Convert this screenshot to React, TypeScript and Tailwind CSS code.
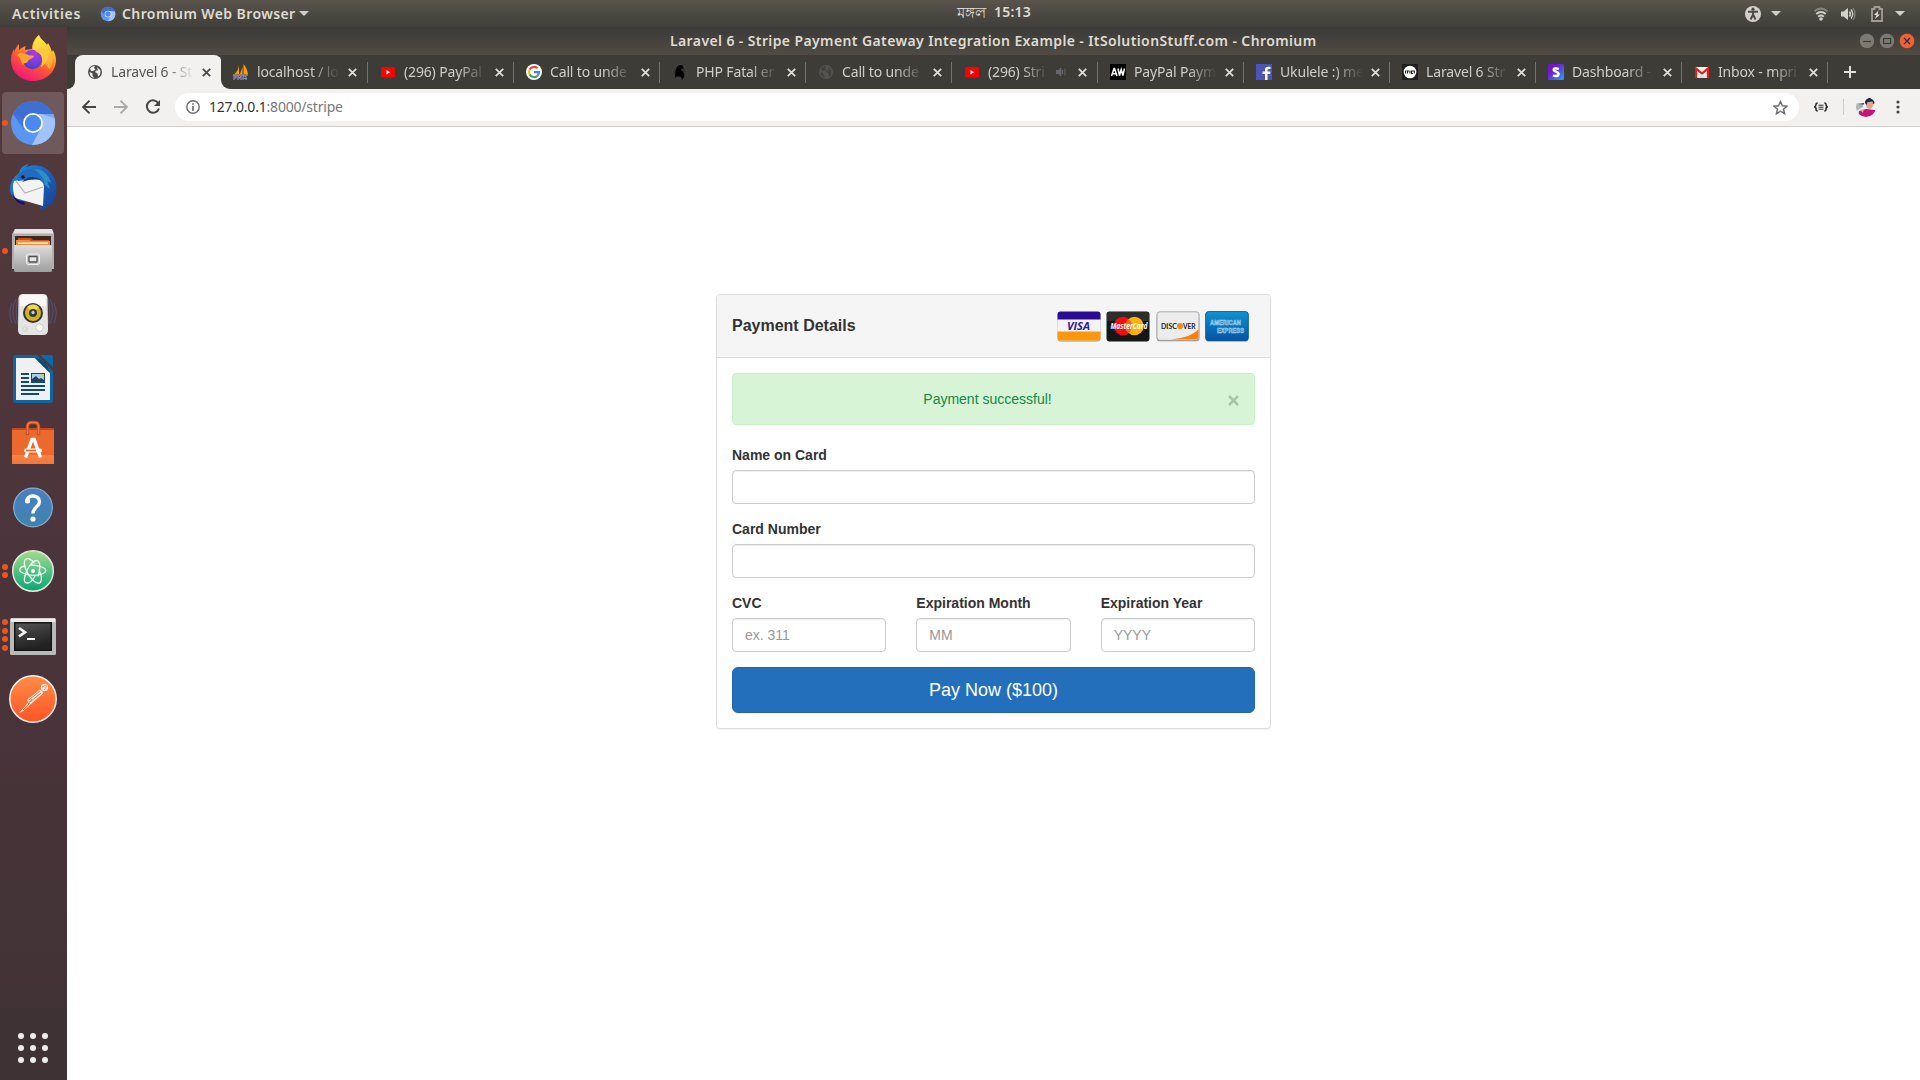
import type { ReactNode } from "react";

/* ---------- dock icons ---------- */

function Firefox() {
  return (
    <svg viewBox="0 0 48 48" className="size-12">
      <defs>
        <linearGradient id="ffBody" x1="0.8" y1="0" x2="0.3" y2="1">
          <stop offset="0" stopColor="#fff44f" />
          <stop offset="0.3" stopColor="#ffb52e" />
          <stop offset="0.6" stopColor="#ff5a35" />
          <stop offset="1" stopColor="#f0127c" />
        </linearGradient>
        <radialGradient id="ffGlobe" cx="0.6" cy="0.2" r="0.9">
          <stop offset="0" stopColor="#b833e1" />
          <stop offset="0.5" stopColor="#7a3fe0" />
          <stop offset="1" stopColor="#3b3fb0" />
        </radialGradient>
        <linearGradient id="ffTail" x1="0" y1="0" x2="0.3" y2="1">
          <stop offset="0" stopColor="#fff44f" />
          <stop offset="1" stopColor="#ffb02e" />
        </linearGradient>
      </defs>
      <path d="M30 0c1 4 5 6 8 10l1-2c2 3 3 6 4 9l1-2c2 3 3 7 3 10 0 12-10 21-23 21S2 36 2 25c0-4 1-8 3-11v3c1-3 3-6 5-8v6c2-2 4-3 7-4-1 2-1 3-1 4l7-1c0-6 3-11 7-14z" fill="url(#ffBody)" />
      <path d="M30 0c1 4 6 6 9 12 5 7 6 15 2 22-3-1-5-9-11-15-3-3-5-4-6-5 0-5 3-10 6-14z" fill="url(#ffTail)" opacity=".9" />
      <circle cx="23.500" cy="24.500" r="9.700" fill="url(#ffGlobe)" />
      <path d="M8 20c3-3 7-2 9-1 3 2 6 1 8 2 0 2-5 3-6 5-1 3-4 1-5 4-3-3-1-6-6-10z" fill="#ffa52d" />
      <path d="M28 17c5 2 7 8 4 15 7-4 8-11 6-16-3-3-8-4-12 0z" fill="#ffc83c" />
    </svg>
  );
}

function Chromium({ className }: { className: string }) {
  return (
    <svg viewBox="0 0 48 48" className={className}>
      <circle cx="24" cy="24" r="22" fill="#5b96f2" />
      <path d="M4 15A22 22 0 0 1 44.200 15H24a9.500 9.500 0 0 0-9 12z" fill="#3f6fd3" />
      <path d="M44.200 15A22 22 0 0 1 23 46l9-17c3-5 1-11-3-14z" fill="#a2c3f9" />
      <path d="M32 15h12.200l1 4z" fill="#7ba5ec" />
      <path d="M4 15l11 16c-1-4-1-8 1-11z" fill="#4575d6" />
      <circle cx="24" cy="24" r="10" fill="#fff" />
      <circle cx="24" cy="24" r="8.200" fill="#4a8af0" />
    </svg>
  );
}

function Thunderbird() {
  return (
    <svg viewBox="0 0 48 48" className="size-12">
      <defs>
        <linearGradient id="tb" x1="0" y1="0" x2="1" y2="1">
          <stop offset="0" stopColor="#2b8bd8" />
          <stop offset="0.5" stopColor="#1c62b8" />
          <stop offset="1" stopColor="#163f8f" />
        </linearGradient>
      </defs>
      <path d="M20 1c-6 1-9 4-10 9C3 15 0 22 1 28c1 5 4 8 7 11l-1-3 8 6-2-4 18 2 1 7c3-1 8-3 10-7l-1 3c4-4 6-9 7-15l-1 2c1-7 0-13-3-17C38 3 28 0 17 4z" fill="url(#tb)" />
      <path d="M5 18l28-5 2 11-1 19L6 35c-2-6-3-12-1-17z" fill="#f3f3f3" />
      <path d="M7 18l9 12 18-6" fill="none" stroke="#b4b4b4" strokeWidth="1.200" />
      <path d="M8 14c4-6 12-10 19-7 8 2 12 9 12 15l-5-2c-5-6-11-8-17-3l-8 1z" fill="#216bc0" />
      <path d="M13 19c5-5 12-7 19-2-5-1-12-1-19 2z" fill="#123a7d" />
      <path d="M25 6c9 0 15 6 17 14-1-1-3-2-4-2l3 8-5-4c-1-7-5-11-11-16z" fill="#2b8fc9" />
      <path d="M3 31c3 4 7 7 12 8l1 3c-7-1-11-5-13-11z" fill="#23115b" />
      <circle cx="14" cy="14" r="1.800" fill="#1b1b2b" />
    </svg>
  );
}

function Files() {
  return (
    <svg viewBox="0 0 48 48" className="size-12">
      <defs>
        <linearGradient id="fc" x1="0" y1="0" x2="0" y2="1">
          <stop offset="0" stopColor="#dedede" />
          <stop offset="1" stopColor="#9d9d9d" />
        </linearGradient>
      </defs>
      <path d="M6 2h37l2 5v35H3V7z" fill="#b0b0b0" />
      <path d="M6 2h37l1.500 4.500h-40z" fill="#e4e4e4" />
      <path d="M6 9h36v11H6z" fill="#3a2a24" />
      <path d="M9 11h13l2 2h16v7H8z" fill="#c84f14" />
      <path d="M7 13h13l2 1h19v6H7z" fill="#f08c3c" />
      <path d="M9 15.500h30v1.500H9z" fill="#fff3e0" />
      <rect x="5" y="18" width="38" height="27" rx="1.500" fill="url(#fc)" />
      <rect x="17.500" y="27" width="13" height="10.500" rx="2" fill="#c9c9c9" stroke="#f2f2f2" />
      <rect x="20" y="29.500" width="8" height="5.500" rx=".5" fill="#e8e8e8" stroke="#4f4f4f" strokeWidth="1.300" />
    </svg>
  );
}

function Rhythmbox() {
  return (
    <svg viewBox="0 0 48 48" className="size-12">
      <g fill="none" stroke="#5b6b9a" strokeWidth="1.300" opacity=".45">
        <path d="M7 8c-4 8-4 17 0 25M3 12c-3 7-3 13 0 20M41 8c4 8 4 17 0 25M45 12c3 7 3 13 0 20M11 4C6 14 6 28 11 37M37 4c5 10 5 24 0 33" />
      </g>
      <path d="M14 3h20q4 0 4.500 4l.5 32q0 5-5 5H14q-5 0-5-5l.5-32Q10 3 14 3z" fill="#e4e4e2" />
      <path d="M14 4h20q3 0 3 3v8H11V7q0-3 3-3z" fill="#f8f8f8" />
      <circle cx="24" cy="22" r="10" fill="#34342f" />
      <circle cx="24" cy="22" r="8" fill="#d3b21f" />
      <path d="M18 16a8 8 0 0 1 12 0l-6 6z" fill="#ecd65a" />
      <circle cx="24" cy="22" r="4" fill="#34383a" />
      <circle cx="24" cy="21.500" r="1.700" fill="#c9cdd0" />
      <circle cx="30.500" cy="36.500" r="3.700" fill="#fafafa" stroke="#bdbdbd" strokeWidth=".7" />
      <rect x="14" y="36" width="4" height="4" rx="1" fill="none" stroke="#cfcfcf" />
    </svg>
  );
}

function Writer() {
  return (
    <svg viewBox="0 0 48 48" className="size-12">
      <path d="M7 0h21l16 16v29q0 3-3 3H7q-3 0-3-3V3q0-3 3-3z" fill="#0f659f" />
      <path d="M7 3h19l15 15v27H7z" fill="#f0f0f0" />
      <path d="M31 0h11q2 0 2 2v10z" fill="#0a6ba8" />
      <path d="M26 3l15 15-3-8-7-6z" fill="#0c4972" />
      <path d="M12 19h8M12 23h8M12 27h8M12 31h24M12 35h24M12 39h18" stroke="#104a6e" strokeWidth="2" />
      <rect x="22.500" y="18.500" width="13" height="9" fill="#a6d1ee" stroke="#104a6e" />
      <path d="M23 27v-3l4-3 3 3 2-1 3 2v2z" fill="#23435a" />
      <circle cx="33.500" cy="20.500" r="1.500" fill="#efc43c" />
    </svg>
  );
}

function Software() {
  return (
    <svg viewBox="0 0 48 48" className="size-12">
      <defs>
        <linearGradient id="sw" x1="0" y1="0" x2="0" y2="1">
          <stop offset="0" stopColor="#e9692f" />
          <stop offset="0.74" stopColor="#ee6a2c" />
          <stop offset="0.75" stopColor="#f58345" />
          <stop offset="1" stopColor="#f0783a" />
        </linearGradient>
      </defs>
      <path d="M3 9h42v36H3z" fill="url(#sw)" />
      <path d="M3 9h42v2H3z" fill="#c5471b" />
      <path d="M18.500 16V7.500q0-4 4-4h3q4 0 4 4V16" fill="none" stroke="#c44a20" strokeWidth="3.400" />
      <path d="M18.500 15V7.500q0-4 4-4h3q4 0 4 4V15" fill="none" stroke="#ee7a48" strokeWidth="1.600" />
      <path d="M16.500 38.500 23 20.500h2.200l6.300 18" fill="none" stroke="#fff" strokeWidth="3.400" />
      <rect x="15" y="29.500" width="18" height="4" rx="2" fill="#fff" />
      <path d="M17 31.500h10" stroke="#ee6a2c" strokeWidth="1.800" />
    </svg>
  );
}

function Help() {
  return (
    <svg viewBox="0 0 48 48" className="size-12">
      <defs>
        <linearGradient id="hp" x1="0" y1="0" x2="0" y2="1">
          <stop offset="0" stopColor="#4b7fc0" />
          <stop offset="1" stopColor="#3f84ad" />
        </linearGradient>
      </defs>
      <circle cx="24" cy="24.500" r="19.300" fill="url(#hp)" stroke="#86add0" strokeWidth="1.200" />
      <path d="M18 19.500c-1.500-8.500 12.500-8.500 12.500-1 0 5.500-6.500 5.500-6.500 12" fill="none" stroke="#fff" strokeWidth="3.400" />
      <circle cx="18.500" cy="18" r="2.500" fill="#fff" />
      <circle cx="24" cy="36" r="2.600" fill="#fff" />
    </svg>
  );
}

function Atom() {
  return (
    <svg viewBox="0 0 48 48" className="size-12">
      <defs>
        <linearGradient id="at" x1="0" y1="0" x2="0" y2="1">
          <stop offset="0" stopColor="#a5dc8c" />
          <stop offset="1" stopColor="#07a678" />
        </linearGradient>
      </defs>
      <circle cx="24" cy="24" r="20.300" fill="url(#at)" stroke="#e2e8dc" strokeWidth="1.500" />
      <g fill="none" stroke="#eefaf0" strokeWidth="1.300" strokeLinecap="round">
        <path d="M16 19c-6 1-7 5-2 7 6 3 14 3 19 1 5-2 5-5 0-7-3-1-7-2-11-2" />
        <path d="M29 29c2-5 3-12 0-15-3-2-8 3-11 9-3 7-4 13 0 13 3 0 6-3 8-7" />
        <path d="M25 16c-3-4-7-6-9-3-2 4 1 12 6 18 4 5 9 7 10 3 1-3 0-7-2-11" />
      </g>
      <circle cx="24" cy="24" r="2" fill="#fff" />
    </svg>
  );
}

function Terminal() {
  return (
    <svg viewBox="0 0 48 48" className="size-12">
      <defs>
        <linearGradient id="tm" x1="0" y1="0" x2="0.3" y2="1">
          <stop offset="0" stopColor="#555" />
          <stop offset="0.5" stopColor="#383838" />
          <stop offset="1" stopColor="#222" />
        </linearGradient>
      </defs>
      <rect x="1" y="7" width="46" height="37" rx="1.500" fill="#b9b9b9" />
      <rect x="2" y="7.500" width="44" height="3.500" fill="#ececec" />
      <rect x="5" y="11" width="38" height="29" fill="#151515" />
      <rect x="6.500" y="12.500" width="35" height="26" fill="url(#tm)" />
      <path d="M10 17l6 4.200-6 4.200" fill="none" stroke="#f2f2f2" strokeWidth="2.600" />
      <path d="M18 28h8" stroke="#fff" strokeWidth="2" />
    </svg>
  );
}

function Postman() {
  return (
    <svg viewBox="0 0 48 48" className="size-12">
      <defs>
        <linearGradient id="pm" x1="0" y1="0" x2="0" y2="1">
          <stop offset="0" stopColor="#ff8d45" />
          <stop offset="1" stopColor="#ff5427" />
        </linearGradient>
      </defs>
      <circle cx="24" cy="24" r="23.200" fill="url(#pm)" stroke="#f6eeea" strokeWidth="1.500" />
      <circle cx="35.500" cy="12.500" r="3.700" fill="#fde9df" />
      <path d="M33 12l5-2M35 15l3-4" stroke="#ff7a3c" strokeWidth=".8" />
      <path d="M31 14.500c2 1 3 2 3 4L22 29l-9 8-3 .5 5-5 4-5-1-3z" fill="#fde9df" />
      <path d="M20 25l11-9M21 27l11-9M19 29l4-5M14 35l7-7" stroke="#ff7238" strokeWidth="1" />
    </svg>
  );
}

function Dock() {
  const items: { icon: ReactNode; dots: number; active?: boolean }[] = [
    { icon: <Firefox />, dots: 0 },
    { icon: <Chromium className="size-12" />, dots: 1, active: true },
    { icon: <Thunderbird />, dots: 0 },
    { icon: <Files />, dots: 1 },
    { icon: <Rhythmbox />, dots: 0 },
    { icon: <Writer />, dots: 0 },
    { icon: <Software />, dots: 0 },
    { icon: <Help />, dots: 0 },
    { icon: <Atom />, dots: 2 },
    { icon: <Terminal />, dots: 4 },
    { icon: <Postman />, dots: 0 },
  ];
  return (
    <nav className="flex w-[67px] shrink-0 flex-col bg-linear-to-b from-[#543a3b] via-[#4b343b] to-[#413336]">
      {items.map((it, i) => (
        <div key={i} className="flex h-16 w-[66px] items-center justify-center">
          <div className={`relative flex h-[62px] w-[62px] items-center justify-center rounded ${it.active ? "bg-[#6f595b]" : ""}`}>
            {it.icon}
            <div className="absolute inset-y-0 left-0 flex flex-col justify-center gap-[2.500px]">
              {Array.from({ length: it.dots }, (_, d) => (
                <span key={d} className="size-1.5 rounded-full bg-[#e95420]" />
              ))}
            </div>
          </div>
        </div>
      ))}
      <div className="mt-auto flex h-[72px] w-[67px] items-center justify-center bg-[#3f3234] pt-2 pr-px">
        <div className="grid grid-cols-3 gap-1.5">
          {Array.from({ length: 9 }, (_, i) => (
            <span key={i} className="size-1.5 rounded-full bg-[#eeeeec]" />
          ))}
        </div>
      </div>
    </nav>
  );
}

/* ---------- desktop top bar ---------- */

function Caret() {
  return (
    <svg viewBox="0 0 10 5" className="h-[5px] w-2.5 shrink-0">
      <path d="M0 0h10L5 5z" fill="#d3d0cb" />
    </svg>
  );
}

function TopBar() {
  return (
    <header className="grid h-[27px] grid-cols-[1fr_auto_1fr] items-center bg-linear-to-b from-[#59544c] to-[#403f3a] font-['Noto_Sans',sans-serif] text-[14px] font-semibold text-[#dfdbd2]">
      <div className="flex items-center pl-3">
        <span className="w-[88px] tracking-[0.65px]">Activities</span>
        <Chromium className="size-4" />
        <span className="ml-1.5 w-[177px] tracking-[0.4px] whitespace-nowrap">Chromium Web Browser</span>
        <Caret />
      </div>
      <div className="flex gap-[6px] pb-1 pl-[67px] leading-5">
        <span className="w-[31px] text-[15px] font-medium whitespace-nowrap">মঙ্গল</span>
        <span className="w-9 tracking-[0.2px]">15:13</span>
      </div>
      <div className="flex items-center justify-end pr-[15px]">
        <svg viewBox="0 0 16 16" className="mr-[10px] size-4">
          <circle cx="8" cy="8" r="8" fill="#d3d0cb" />
          <circle cx="8" cy="3.200" r="1.600" fill="#4b4843" />
          <path d="M3 5.800h10M8 5.500v4M8 8.500l-2.500 5M8 8.500l2.500 5" stroke="#4b4843" strokeWidth="1.900" fill="none" />
        </svg>
        <Caret />
        <svg viewBox="0 0 16 14" className="mr-[11px] ml-8 h-3.5 w-4" fill="none" strokeWidth="1.800">
          <path d="M1.500 4.200q6.500-5.400 13 0" stroke="#8b8780" />
          <path d="M3.300 7q4.700-4 9.400 0M5.200 9.700q2.800-2.400 5.600 0" stroke="#d3d0cb" />
          <circle cx="8" cy="12" r="1.800" fill="#d3d0cb" />
        </svg>
        <svg viewBox="0 0 16 14" className="mr-[15px] h-3.5 w-4" fill="none">
          <path d="M1 4.500h2.500L8 1v12L3.500 9.500H1z" fill="#d3d0cb" />
          <path d="M9.500 4.500q1.800 2.500 0 5" stroke="#d3d0cb" strokeWidth="1.500" />
          <path d="M11 2.500q3.500 4.500 0 9" stroke="#d3d0cb" strokeWidth="1.300" />
          <path d="M13 1q4 6 0 12" stroke="#85817a" strokeWidth="1.300" />
        </svg>
        <svg viewBox="0 0 12 16" className="mr-3 h-4 w-3">
          <path d="M1 3h2.500V1h5v2H11v12H1z" fill="none" stroke="#a19d96" strokeWidth="1.800" />
          <path d="M7.500 4.500L3 9h2.500L4 13l5-4.500H6.500z" fill="#e4e1dc" />
        </svg>
        <Caret />
      </div>
    </header>
  );
}

function TitleBar() {
  return (
    <div className="grid h-7 grid-cols-[1fr_auto_1fr] items-center bg-linear-to-b from-[#3b3a36] to-[#504c45] font-['Noto_Sans',sans-serif] text-[14px] font-semibold text-[#dfdbd2]">
      <span />
      <h1 className="w-[647px] pb-0.5 tracking-[0.39px] whitespace-nowrap">
        Laravel 6 - Stripe Payment Gateway Integration Example - ItSolutionStuff.com - Chromium
      </h1>
      <div className="flex items-center justify-end gap-1 pr-[5px]">
        <svg viewBox="0 0 16 16" className="size-4">
          <circle cx="8" cy="8" r="7.700" fill="#7d7a74" stroke="#35342f" strokeWidth=".6" />
          <path d="M4 8.500h8" stroke="#3c3b37" strokeWidth="1.200" />
        </svg>
        <svg viewBox="0 0 16 16" className="size-4">
          <circle cx="8" cy="8" r="7.700" fill="#7d7a74" stroke="#35342f" strokeWidth=".6" />
          <rect x="4.600" y="5.500" width="7" height="5" fill="none" stroke="#3c3b37" strokeWidth="1.200" />
        </svg>
        <svg viewBox="0 0 16 16" className="size-4">
          <circle cx="8" cy="8" r="7.700" fill="#ec6338" stroke="#57301f" strokeWidth=".6" />
          <path d="M5 5l6 6M11 5l-6 6" stroke="#3c2a22" strokeWidth="1.400" />
        </svg>
      </div>
    </div>
  );
}

/* ---------- tab strip ---------- */

function Globe({ color, land }: { color: string; land: string }) {
  return (
    <svg viewBox="0 0 16 16" className="size-4 shrink-0">
      <circle cx="8" cy="8" r="7" fill={color} />
      <path d="M3 4.500c1-1.500 3-2.500 5-2.500L7 4l1.500 1.500L6 7H4zM2.500 8l3 1.500v2L7 14c-3-.5-4.500-3-4.500-6zM10 3l3.500 3.500L13 11l-2 1.500-.5-3L8 8l1-1.500h2z" fill={land} />
    </svg>
  );
}

const youtube = (
  <svg viewBox="0 0 16 16" className="size-4 shrink-0">
    <rect x="1" y="3" width="14" height="10.500" rx="2" fill="#f00" />
    <path d="M6.500 6v4.500L10 8.200z" fill="#fff" />
  </svg>
);

const phpMyAdmin = (
  <svg viewBox="0 0 16 16" className="size-4 shrink-0">
    <path d="M6 1v9H1.500C4 8 5.500 5 6 1zM10.500 0c2.500 3 4 6 4.500 10h-4.500zM9.500 3v7H7z" fill="#f89c0e" />
    <path d="M0 11h15" stroke="#f8b95c" strokeWidth="1" />
    <path d="M1 16v-4h2v2H1M5 16v-4l1.500 2L8 12v4M10 16v-3q2-2 3 0v3M10 14.500h4" fill="none" stroke="#8d8bc9" strokeWidth="1.200" />
  </svg>
);

const google = (
  <svg viewBox="0 0 16 16" className="size-4 shrink-0">
    <circle cx="8" cy="8" r="8" fill="#fff" />
    <g fill="none" strokeWidth="2.200">
      <path d="M11.500 4.300A5 5 0 0 0 3.700 5.500" stroke="#ea4335" />
      <path d="M3.700 5.500a5 5 0 0 0 0 5" stroke="#fbbc05" />
      <path d="M3.700 10.500a5 5 0 0 0 7.800 1.200" stroke="#34a853" />
      <path d="M11.500 11.700A5 5 0 0 0 13 8.100H8" stroke="#4285f4" />
    </g>
  </svg>
);

const swan = (
  <svg viewBox="0 0 16 16" className="size-4 shrink-0">
    <circle cx="7.500" cy="7.500" r="6.800" fill="#35342f" stroke="#4d4c46" strokeWidth=".8" />
    <path d="M3 14C3 8 4 2 8 1c3 0 4 2 3 4-1-1-2 0-2 1 3 2 4 4 3 7l-2 3-1-3c-3-1-4-1-6 1z" fill="#000" />
  </svg>
);

const answers = (
  <svg viewBox="0 0 16 16" className="size-4 shrink-0">
    <rect width="16" height="16" fill="#000" />
    <path d="M1.500 12L4 4.500h.5L7 12M2.500 9.800h3.500M8 4.500l1.500 7 1.700-6 1.700 6 1.600-7" fill="none" stroke="#fff" strokeWidth="1.500" />
  </svg>
);

const facebook = (
  <svg viewBox="0 0 16 16" className="size-4 shrink-0">
    <rect width="16" height="16" fill="#4a55b5" />
    <path d="M9 16V10H6.500V7.500H9V6q0-3.200 3.200-3.200H14.500V5h-1.700Q11.500 5 11.500 6v1.500h3L14 10h-2.500v6z" fill="#fff" />
  </svg>
);

const itSolution = (
  <svg viewBox="0 0 16 16" className="size-4 shrink-0">
    <rect width="16" height="16" fill="#1f1f1f" />
    <circle cx="8" cy="8" r="6.300" fill="#fff" />
    <path d="M3.500 6.500v3M5.500 6.500v3M4.500 7h2.500M8 6.500v3M9.500 7v2.500h1.500M12.300 6.500v3M9 7h3" stroke="#222" strokeWidth="1.100" fill="none" />
  </svg>
);

const stripe = (
  <svg viewBox="0 0 16 16" className="size-4 shrink-0">
    <defs>
      <linearGradient id="st" x1="0" y1="0" x2="1" y2="1">
        <stop offset="0.3" stopColor="#7414ce" />
        <stop offset="1" stopColor="#1ea8f4" />
      </linearGradient>
    </defs>
    <rect width="16" height="16" rx="1.500" fill="url(#st)" />
    <path d="M10.800 5.200Q5.600 3.200 5.600 5.700c0 2.200 5 1.700 5 4.300 0 2.800-4 2.200-5.600 1.300" fill="none" stroke="#fff" strokeWidth="2.400" />
  </svg>
);

const gmail = (
  <svg viewBox="0 0 16 16" className="size-4 shrink-0">
    <rect x="1" y="3" width="14" height="11" fill="#eee" />
    <path d="M2.100 14V4.500L8 9.500l5.900-5V14" fill="none" stroke="#e0201b" strokeWidth="2.200" />
    <path d="M4 14l4-4 4 4z" fill="#dcdcdc" />
  </svg>
);

function CloseIcon({ color }: { color: string }) {
  return (
    <svg viewBox="0 0 9 9" className="size-[9px] shrink-0">
      <path d="M.8.800l7.400 7.400M8.200.800L.8 8.200" stroke={color} strokeWidth="1.800" />
    </svg>
  );
}

function TabBody({ icon, title, muted, dark }: { icon: ReactNode; title: string; muted?: boolean; dark?: boolean }) {
  return (
    <div className="flex h-[34px] items-center pl-3">
      {icon}
      <span
        className={`ml-2 shrink-0 overflow-hidden pb-0.5 tracking-[-0.15px] whitespace-nowrap ${
          muted
            ? "w-[61px] [mask-image:linear-gradient(to_right,black_55%,transparent_100%)]"
            : "w-[83px] [mask-image:linear-gradient(to_right,black_65%,transparent_100%)]"
        }`}
      >
        {title}
      </span>
      {muted && (
        <svg viewBox="0 0 10 10" className="mr-[12px] ml-[7px] size-2.5 shrink-0">
          <path d="M0 3.500h2L5 1v8L2 6.500H0zM6.500 3v4M9 1.500v7" fill="#66656a" stroke="#66656a" strokeWidth="1" />
        </svg>
      )}
      <span className={muted ? "flex" : "ml-[7.500px] flex"}>
        <CloseIcon color={dark ? "#4a4a46" : "#deddd8"} />
      </span>
    </div>
  );
}

function TabStrip() {
  const tabs: { icon: ReactNode; title: string; muted?: boolean }[] = [
    { icon: phpMyAdmin, title: "localhost / lo" },
    { icon: youtube, title: "(296) PayPal" },
    { icon: google, title: "Call to unde" },
    { icon: swan, title: "PHP Fatal er" },
    { icon: <Globe color="#54534f" land="#42413c" />, title: "Call to unde" },
    { icon: youtube, title: "(296) Stri", muted: true },
    { icon: answers, title: "PayPal Paym" },
    { icon: facebook, title: "Ukulele :) me" },
    { icon: itSolution, title: "Laravel 6 Str" },
    { icon: stripe, title: "Dashboard -" },
    { icon: gmail, title: "Inbox - mpri" },
  ];
  return (
    <div className="flex h-[34px] bg-[#3d3c37] font-['Noto_Sans',sans-serif] text-[14px] text-[#d0cec7]">
      <div className="flex w-2 items-end bg-[#f2f1f0]">
        <span className="h-[34px] w-2 rounded-br-lg bg-[#3d3c37]" />
      </div>
      <div className="w-[147px] rounded-t-lg bg-[#f2f1f0] text-[#56554f]">
        <TabBody icon={<Globe color="#4c4c4c" land="#f2f1f0" />} title="Laravel 6 - St" dark />
      </div>
      {tabs.map((t, i) => (
        <div key={i} className={i === 0 ? "-ml-px flex w-[147px] bg-[linear-gradient(to_right,#f2f1f0_10px,transparent_10px)]" : "flex w-[146px]"}>
          <div className={i === 0 ? "w-[146px] rounded-bl-[9px] bg-[#3d3c37]" : "w-[145px]"}>
            <TabBody {...t} />
          </div>
          <span className="mt-[7px] h-[21px] w-px bg-[#75736d]" />
        </div>
      ))}
      <svg viewBox="0 0 12 12" className="mt-[11px] ml-4 size-3">
        <path d="M6 0v12M0 6h12" stroke="#e2e0dc" strokeWidth="2" />
      </svg>
    </div>
  );
}

/* ---------- toolbar ---------- */

function Toolbar() {
  return (
    <div className="flex h-[38px] items-center border-b border-[#cfcecc] bg-[#f2f1f0] pr-5 pb-px pl-[15px]">
      <svg viewBox="0 0 14 14" className="size-3.5" fill="none" stroke="#454545" strokeWidth="1.900">
        <path d="M14 7H1.500M7.500.700L1.200 7l6.300 6.300" />
      </svg>
      <svg viewBox="0 0 14 14" className="ml-[18px] size-3.5" fill="none" stroke="#aaa9a8" strokeWidth="1.900">
        <path d="M0 7h12.500M6.500.700L12.800 7l-6.300 6.300" />
      </svg>
      <svg viewBox="0 0 16 16" className="ml-[17px] size-4" fill="none" stroke="#454545" strokeWidth="2">
        <path d="M13.500 4.500A6.200 6.200 0 1 0 14 9.500" />
        <path d="M15 1v6H9z" fill="#454545" stroke="none" />
      </svg>
      <div className="ml-[14px] flex h-7 flex-1 items-center rounded-full bg-white pr-[11px] pl-[11px] font-['Noto_Sans',sans-serif] text-[14px] tracking-[-0.2px] text-[#77777a]">
        <svg viewBox="0 0 14 14" className="mr-[9px] size-3.5">
          <circle cx="7" cy="7" r="6.200" fill="none" stroke="#6b6b6b" strokeWidth="1.400" />
          <path d="M7 3.200v1.600M7 6v5" stroke="#6b6b6b" strokeWidth="1.700" />
        </svg>
        <span className="pb-px text-[#333]">127.0.0.1</span>
        <span className="pb-px">:8000/stripe</span>
        <svg viewBox="0 0 24 24" className="ml-auto size-[15px]" fill="none" stroke="#6b6b6b" strokeWidth="2.300">
          <path d="M12 2.500l3 6.700 7.300.700-5.500 4.800 1.700 7.200L12 18l-6.500 3.900 1.700-7.200L1.700 9.900 9 9.200z" />
        </svg>
      </div>
      <svg viewBox="0 0 14 10" className="ml-[15px] h-2.5 w-3.5" fill="none" stroke="#2c2c2c">
        <path d="M3.700 1Q2 1 2 2.500T.6 5Q2 5 2 7t1.700 2M10.300 1Q12 1 12 2.500T13.400 5Q12 5 12 7t-1.700 2" strokeWidth="1.600" />
        <path d="M4.500 3.200h5M4.500 5.200h5M4.500 7.200h5" strokeWidth="1" />
      </svg>
      <span className="ml-[15px] h-4 w-px bg-[#cccbc9]" />
      <svg viewBox="0 0 20 20" className="ml-3 size-5">
        <clipPath id="av">
          <circle cx="10" cy="10" r="10" />
        </clipPath>
        <g clipPath="url(#av)">
          <rect width="20" height="20" fill="#eef0f2" />
          <path d="M0 6l7 1v3l-7 4z" fill="#a9b4bd" />
          <path d="M2 7l6-1v1.500z" fill="#333a55" />
          <path d="M2 20l1-6 7-2 9 1 1 7z" fill="#c01775" />
          <ellipse cx="13.500" cy="7" rx="3.700" ry="5" fill="#dfa48d" />
          <path d="M9 6c0-6 10-7 9.500 0l-1 1.500-1-3-5 .5-1 3z" fill="#1f2547" />
          <path d="M4 13l4-1-1 4z" fill="#dfa48d" />
        </g>
      </svg>
      <svg viewBox="0 0 4 14" className="ml-5 h-3.5 w-1" fill="#454545">
        <circle cx="2" cy="2" r="1.600" />
        <circle cx="2" cy="7" r="1.600" />
        <circle cx="2" cy="12" r="1.600" />
      </svg>
    </div>
  );
}

/* ---------- payment form ---------- */

function CardLogos() {
  const italic = "font-['Open_Sans',sans-serif] italic font-bold";
  return (
    <div className="flex gap-[5.300px] pt-px pr-[6px]">
      <svg viewBox="0 0 44 31" className="h-[31px] w-11">
        <rect x=".5" y="1" width="43" height="29.500" rx="3" fill="#9a9a9a" />
        <rect x=".5" y=".5" width="43" height="29" rx="3" fill="#f4f4f6" />
        <path d="M.5 8.500v-5q0-3 3-3h37q3 0 3 3v5z" fill="#2a0c94" />
        <path d="M.5 20.500v6q0 3 3 3h37q3 0 3-3v-6z" fill="#fb9708" />
        <text x="21.500" y="18.500" textAnchor="middle" textLength="23" lengthAdjust="spacingAndGlyphs" fontSize="10.500" fill="#2e1a9b" className={italic}>VISA</text>
      </svg>
      <svg viewBox="0 0 44 31" className="h-[31px] w-11">
        <rect x=".5" y=".5" width="43" height="30" rx="3" fill="#161616" />
        <path d="M1 10V4q0-3 3-3h36q3 0 3 3v6z" fill="#2d2d2d" />
        <circle cx="17" cy="15" r="9.200" fill="#f70d0d" />
        <circle cx="28.500" cy="15" r="9.200" fill="#fdb10a" />
        <path d="M22.700 8a9.200 9.200 0 0 1 0 14 9.200 9.200 0 0 1 0-14z" fill="#f7650c" />
        <text x="23" y="18" textAnchor="middle" textLength="37" lengthAdjust="spacingAndGlyphs" fontSize="8.500" fill="#fff" className={italic}>MasterCard</text>
      </svg>
      <svg viewBox="0 0 44 31" className="h-[31px] w-11">
        <rect x=".7" y="1.200" width="42.600" height="29" rx="3" fill="#888" />
        <rect x="1" y=".8" width="42" height="28.500" rx="3" fill="#ececec" stroke="#a5a5a5" strokeWidth=".9" />
        <path d="M15 28.500Q34 27 42.500 18.500v7q0 3-3 3z" fill="#fb800a" />
        <text x="5" y="18" textLength="16" lengthAdjust="spacingAndGlyphs" fontSize="8" fontWeight="700" fill="#222" className="font-['Lato',sans-serif]">DISC</text>
        <circle cx="24" cy="15" r="3.100" fill="#f78c1e" />
        <text x="27" y="18" textLength="12.500" lengthAdjust="spacingAndGlyphs" fontSize="8" fontWeight="700" fill="#222" className="font-['Lato',sans-serif]">VER</text>
      </svg>
      <svg viewBox="0 0 44 31" className="h-[31px] w-11">
        <defs>
          <linearGradient id="ax" x1="0" y1="0" x2="0" y2="1">
            <stop offset="0" stopColor="#0f93cf" />
            <stop offset="1" stopColor="#0454a4" />
          </linearGradient>
        </defs>
        <rect x=".5" y=".7" width="43" height="29.800" rx="3" fill="#777" />
        <rect x=".7" y=".5" width="42.600" height="29" rx="3" fill="url(#ax)" stroke="#0b568e" strokeWidth=".8" />
        <g fontSize="7" fontWeight="700" fill="#1a7fc0" stroke="#a9d6f2" strokeWidth=".55" className="font-['Liberation_Sans',sans-serif]">
          <text x="5" y="13.500" textLength="31" lengthAdjust="spacingAndGlyphs">AMERICAN</text>
          <text x="12" y="21.500" textLength="27" lengthAdjust="spacingAndGlyphs">EXPRESS</text>
        </g>
      </svg>
    </div>
  );
}

function Field({ label, placeholder }: { label: string; placeholder?: string }) {
  return (
    <label className="block">
      <span className="mb-[5px] block font-bold">{label}</span>
      <input
        type="text"
        placeholder={placeholder}
        className="block h-[34px] w-full rounded border border-[#ccc] bg-white px-3 shadow-[inset_0_1px_1px_rgba(0,0,0,0.075)] placeholder:text-[#999]"
      />
    </label>
  );
}

function PaymentPanel() {
  return (
    <section className="mt-[167px] ml-[649px] w-[555px] rounded border border-[#ddd] bg-white font-['Liberation_Sans',Arial,sans-serif] text-[14px] leading-5 text-[#333] shadow-[0_1px_1px_rgba(0,0,0,0.05)]">
      <div className="flex h-[63px] items-center justify-between rounded-t-[3px] border-b border-[#ddd] bg-[#f5f5f5] px-[15px]">
        <h3 className="text-base font-bold">Payment Details</h3>
        <CardLogos />
      </div>
      <form className="flex flex-col gap-[15px] p-[15px]">
        <div className="mb-[5px] flex h-[52px] items-center rounded border border-[#c9efc5] bg-[#d8f4d7] px-[15px] text-[#118848]">
          <p className="flex-1 text-center">Payment successful!</p>
          <button type="button" aria-label="Close" className="flex w-3 justify-center pt-[3px]">
            <svg viewBox="0 0 11 11" className="size-[11px] shrink-0">
              <path d="M1 1l9 9M10 1L1 10" stroke="#aac3a9" strokeWidth="2.500" />
            </svg>
          </button>
        </div>
        <Field label="Name on Card" />
        <Field label="Card Number" />
        <div className="grid grid-cols-3 gap-[30px]">
          <Field label="CVC" placeholder="ex. 311" />
          <Field label="Expiration Month" placeholder="MM" />
          <Field label="Expiration Year" placeholder="YYYY" />
        </div>
        <button type="button" className="h-[46px] rounded-md border border-[#2264a8] bg-[#236fbb] text-[18px] text-white">
          Pay Now ($100)
        </button>
      </form>
    </section>
  );
}

export default function App() {
  return (
    <div className="flex h-[1080px] w-[1920px] flex-col overflow-hidden bg-white">
      <TopBar />
      <div className="flex flex-1">
        <Dock />
        <main className="flex min-w-0 flex-1 flex-col">
          <TitleBar />
          <TabStrip />
          <Toolbar />
          <PaymentPanel />
        </main>
      </div>
    </div>
  );
}
